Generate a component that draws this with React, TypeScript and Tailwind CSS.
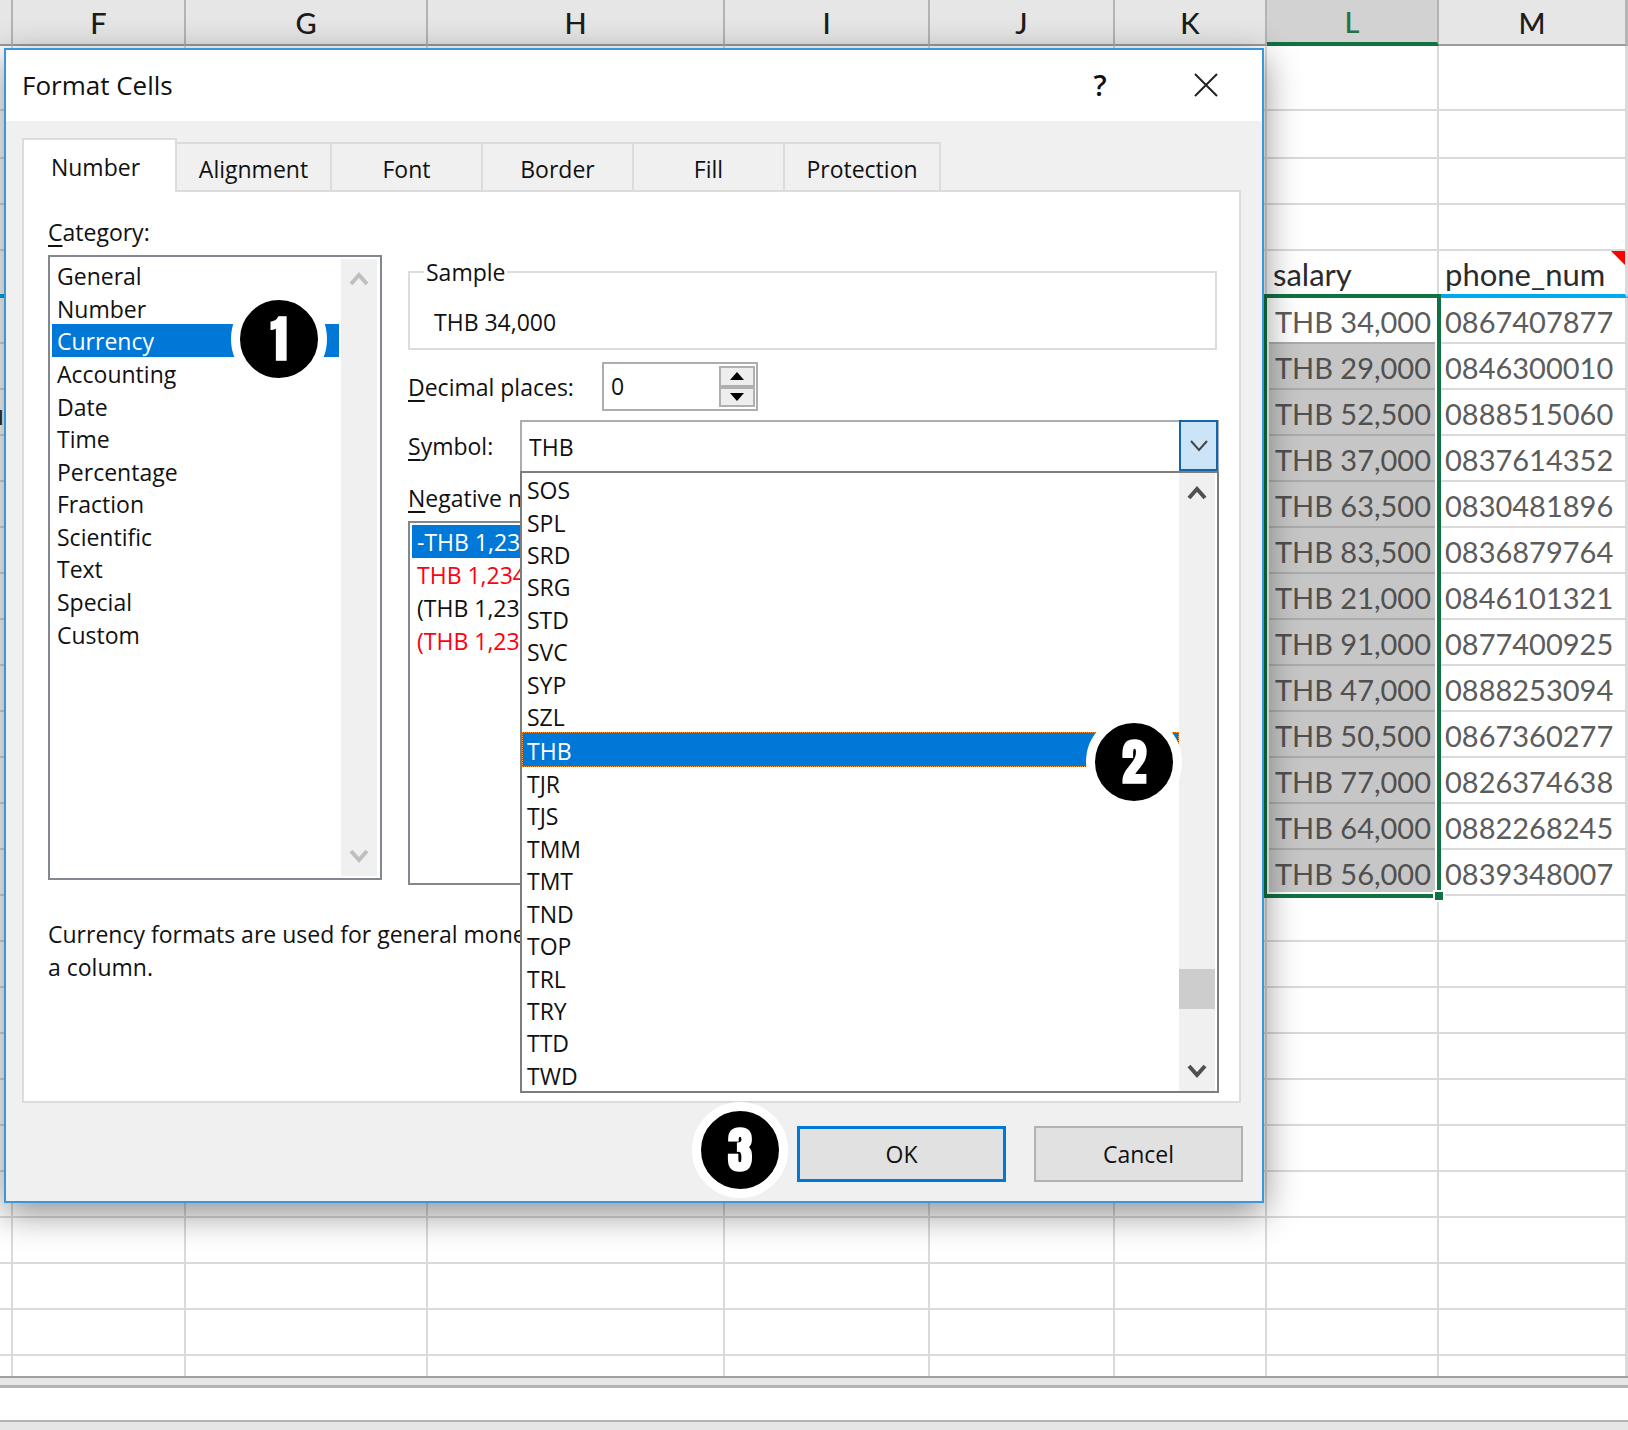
import type { ReactNode } from "react";

const columns = [
  { name: "", width: "w-[13px]" },
  { name: "F", width: "w-[173px]" },
  { name: "G", width: "w-[242px]" },
  { name: "H", width: "w-[297px]" },
  { name: "I", width: "w-[205px]" },
  { name: "J", width: "w-[185px]" },
  { name: "K", width: "w-[152px]" },
  { name: "L", width: "w-[172px]" },
  { name: "M", width: "w-[188px]" },
  { name: "", width: "" },
];

const people = [
  ["THB 34,000", "0867407877"],
  ["THB 29,000", "0846300010"],
  ["THB 52,500", "0888515060"],
  ["THB 37,000", "0837614352"],
  ["THB 63,500", "0830481896"],
  ["THB 83,500", "0836879764"],
  ["THB 21,000", "0846101321"],
  ["THB 91,000", "0877400925"],
  ["THB 47,000", "0888253094"],
  ["THB 50,500", "0867360277"],
  ["THB 77,000", "0826374638"],
  ["THB 64,000", "0882268245"],
  ["THB 56,000", "0839348007"],
];

const categories = [
  "General", "Number", "Currency", "Accounting", "Date", "Time",
  "Percentage", "Fraction", "Scientific", "Text", "Special", "Custom",
];

const symbols = [
  "SOS", "SPL", "SRD", "SRG", "STD", "SVC", "SYP", "SZL", "THB", "TJR",
  "TJS", "TMM", "TMT", "TND", "TOP", "TRL", "TRY", "TTD", "TWD",
];

const negatives = [
  { text: "-THB 1,234", tone: "bg-[#0078d7] text-white" },
  { text: "THB 1,234", tone: "text-[#ff0010]" },
  { text: "(THB 1,234)", tone: "text-[#111]" },
  { text: "(THB 1,234)", tone: "text-[#ff0010]" },
];

const tabs = ["Alignment", "Font", "Border", "Fill", "Protection"];
const tabWidths = ["w-[155px]", "w-[151px]", "w-[151px]", "w-[151px]", "w-[156px]"];

const cell = "border-r-2 border-b-2 border-[#dadada] p-0";

function EmptyRow({ height, last = false }: { height: string; last?: boolean }) {
  return (
    <tr className={height}>
      {columns.map((_, i) => (
        <td key={i} className={last ? "border-r-2 border-[#dadada] p-0" : cell} />
      ))}
    </tr>
  );
}

function Sheet() {
  return (
    <table className="w-full table-fixed border-separate border-spacing-0 font-['Lato',sans-serif] text-[29px] leading-[40px] text-[#2b2b2b]">
      <colgroup>
        {columns.map((c, i) => (
          <col key={i} className={c.width} />
        ))}
      </colgroup>
      <thead>
        <tr className="h-[46px] bg-[#e6e6e6] text-[#1c1c1c]">
          {columns.map((c, i) => (
            <th
              key={i}
              scope="col"
              className={
                c.name === "L"
                  ? "border-r-2 border-b-4 border-r-[#b4b4b4] border-b-[#107240] bg-[#d2d2d2] p-0 pt-0.5 font-medium text-[#217346]"
                  : "border-r-2 border-b-2 border-r-[#b4b4b4] border-b-[#9b9b9b] p-0 pt-0.5 font-medium"
              }
            >
              {c.name}
            </th>
          ))}
        </tr>
      </thead>
      <tbody>
        <EmptyRow height="h-[65px]" />
        <EmptyRow height="h-[48px]" />
        <EmptyRow height="h-[46px]" />
        <EmptyRow height="h-[46px]" />
        <tr className="h-[47px] text-[31px]">
          {columns.map((c, i) => (
            <td key={i} className="relative border-r-2 border-b-4 border-r-[#dadada] border-b-[#00a9ee] p-0 pt-0.5 whitespace-nowrap">
              {c.name === "L" && <span className="pl-1.5">salary</span>}
              {c.name === "M" && (
                <>
                  <span className="pl-1.5">phone_num</span>
                  <svg className="absolute top-0 right-0 h-3.5 w-3.5" viewBox="0 0 14 14" aria-hidden="true">
                    <path d="M0 0H14V14Z" fill="#f00" />
                  </svg>
                </>
              )}
            </td>
          ))}
        </tr>
        {people.map(([salary, phone], row) => (
          <tr key={phone} className="h-[46px] text-[#5c5c5c]">
            <td className={cell}>
              {row === 2 && (
                <div className="flex h-10 justify-end overflow-hidden pt-0.5 pr-[7px] text-[#333]">
                  <span>u</span>
                </div>
              )}
            </td>
            {columns.slice(1, 7).map((c) => (
              <td key={c.name} className={cell} />
            ))}
            <td
              className={
                row === 0
                  ? "relative border-r-2 border-b-2 border-[#ababab] bg-white p-0 pt-1 pr-1.5 text-right whitespace-nowrap"
                  : "border-r-2 border-b-2 border-[#ababab] bg-[#c6c6c6] p-0 pt-1 pr-1.5 text-right whitespace-nowrap text-[#505050]"
              }
            >
              {salary}
              {row === 0 && (
                <div className="absolute -top-1 -left-1 h-[604px] w-[178px] border-4 border-[#107240]">
                  <div className="h-full border-2 border-white" />
                  <div className="absolute -right-2 -bottom-2 h-3 w-3 border-2 border-white bg-[#107240]" />
                </div>
              )}
            </td>
            <td className="border-r-2 border-b-2 border-[#dadada] p-0 pt-1">
              <span className="pl-1.5">{phone}</span>
            </td>
            <td className={cell} />
          </tr>
        ))}
        {Array.from({ length: 10 }, (_, i) => (
          <EmptyRow key={i} height="h-[46px]" />
        ))}
        <EmptyRow height="h-[20px]" last />
      </tbody>
    </table>
  );
}

function Badge({ place, children }: { place: string; children: ReactNode }) {
  return (
    <span
      className={`absolute z-10 flex h-24 w-24 items-center justify-center rounded-full border-[9px] border-white bg-black font-['Impact','Anton','Noto_Sans_ExtraCondensed_Black','Noto_Sans_ExtraCondensed','Open_Sans_Condensed','Roboto_Condensed','DejaVu_Sans_Condensed',sans-serif] text-[50px] leading-none font-black text-white ${place}`}
    >
      {children}
    </span>
  );
}

function Chevron({ up = false, thin = false, color }: { up?: boolean; thin?: boolean; color: string }) {
  return (
    <svg className="h-5 w-5" viewBox="0 0 20 20" fill="none" stroke={color} strokeWidth={thin ? 2 : 4} aria-hidden="true">
      <path d={up ? "M2 15L10 6L18 15" : "M2 5L10 14L18 5"} />
    </svg>
  );
}

function Key({ children }: { children: string }) {
  return <span className="underline decoration-2 underline-offset-4">{children}</span>;
}

function SymbolPicker() {
  return (
    <div className="relative -mr-0.5 h-[51px] flex-1">
      <select
        id="symbol"
        defaultValue="THB"
        className="h-full w-full appearance-none border-2 border-b-0 border-[#acacb4] bg-white pl-[7px]"
      >
        {symbols.map((s) => (
          <option key={s}>{s}</option>
        ))}
      </select>
      <span className="pointer-events-none absolute top-0 right-px flex h-full w-[39px] items-center justify-center border-2 border-[#1166ac] bg-[#cce4f7]">
        <Chevron thin color="#444" />
      </span>
      <div className="absolute top-full right-0 left-0 flex h-[622px] border-2 border-[#7d7d7d] bg-white">
        <ul role="listbox" aria-label="Symbol" className="flex flex-1 flex-col leading-7">
          {symbols.map((s) => (
            <li
              key={s}
              role="option"
              aria-selected={s === "THB"}
              className={
                s === "THB"
                  ? "relative flex flex-1 items-center border border-dotted border-[#ff9a3c] bg-[#0078d7] pt-0.5 pl-1 text-white"
                  : "flex flex-1 items-center pt-0.5 pl-[5px]"
              }
            >
              {s}
              {s === "THB" && <Badge place="-right-1 -top-[19px]">2</Badge>}
            </li>
          ))}
        </ul>
        <div className="mr-0.5 flex w-9 flex-col items-center bg-[#f0f0f0] pt-2.5 pb-2.5">
          <Chevron up color="#505050" />
          <div className="mt-[466px] h-10 w-full bg-[#cdcdcd]" />
          <div className="flex-1" />
          <Chevron color="#505050" />
        </div>
      </div>
    </div>
  );
}

function FormatDialog() {
  return (
    <div
      role="dialog"
      aria-labelledby="dialog-title"
      className="absolute top-12 left-1 w-[1260px] border-2 border-[#3c96dc] bg-[#f0f0f0] font-['Open_Sans','Noto_Sans',sans-serif] text-[23px] leading-[32px] text-[#111] shadow-[0_10px_34px_rgba(0,0,0,0.45)]"
    >
      <header className="flex h-[71px] items-center bg-white pr-11 pb-0.5 pl-4">
        <h1 id="dialog-title" className="flex-1 text-[26px]">
          Format Cells
        </h1>
        <button aria-label="Help" className="w-8 text-[29px] leading-8 font-semibold">
          ?
        </button>
        <button aria-label="Close" className="ml-[78px] flex h-6 w-6">
          <svg viewBox="0 0 24 24" stroke="#222" strokeWidth="2" aria-hidden="true">
            <path d="M1 1L23 23M23 1L1 23" />
          </svg>
        </button>
      </header>

      <div className="pt-[17px] pr-[19px] pb-[19px] pl-4">
        <div role="tablist" className="flex items-end">
          <button role="tab" aria-selected="true" className="relative -mb-0.5 h-[54px] w-[155px] border-2 border-b-0 border-[#dcdcdc] bg-white pt-0.5 pr-2">
            Number
          </button>
          {tabs.map((t, i) => (
            <button key={t} role="tab" aria-selected="false" className={`h-12 border-t-2 border-r-2 border-[#dcdcdc] pt-1 ${tabWidths[i]}`}>
              {t}
            </button>
          ))}
        </div>

        <section className="mr-0.5 border-2 border-[#dcdcdc] bg-white pt-6 pr-[22px] pl-6">
          <div className="flex gap-[26px]">
            <div className="w-[334px]">
              <div id="category-label">
                <Key>C</Key>ategory:
              </div>
              <div className="mt-[7px] flex h-[625px] border-2 border-[#828790] py-0.5 pr-[3px] pl-0.5">
                <ul role="listbox" aria-labelledby="category-label" className="mr-0.5 flex h-[391px] flex-1 flex-col leading-7">
                  {categories.map((c) => (
                    <li
                      key={c}
                      role="option"
                      aria-selected={c === "Currency"}
                      className={
                        c === "Currency"
                          ? "relative flex flex-1 items-center bg-[#0078d7] pt-0.5 pl-[5px] text-white"
                          : "flex flex-1 items-center pt-0.5 pl-[5px]"
                      }
                    >
                      {c}
                      {c === "Currency" && <Badge place="right-3 -top-[33px]">1</Badge>}
                    </li>
                  ))}
                </ul>
                <div className="flex w-9 flex-col items-center justify-between bg-[#f0f0f0] py-2.5">
                  <Chevron up color="#bfbfbf" />
                  <Chevron color="#bfbfbf" />
                </div>
              </div>
            </div>

            <div className="flex-1 pt-10">
              <fieldset className="h-[94px] border-2 border-[#dcdcdc] px-3.5">
                <legend className="px-0.5">Sample</legend>
                <output className="mt-[18px] ml-2.5 block">THB 34,000</output>
              </fieldset>
              <div className="mt-3 flex items-center">
                <label htmlFor="decimals" className="w-[194px]">
                  <Key>D</Key>ecimal places:
                </label>
                <div className="flex h-[49px] w-[156px] border-2 border-[#acacb4] bg-white py-0.5 pr-px pl-0.5">
                  <input id="decimals" defaultValue="0" className="w-0 flex-1 pb-0.5 pl-[5px] outline-none" />
                  <div className="flex w-9 flex-col">
                    <button aria-label="Increase" className="flex flex-1 items-center justify-center border-2 border-[#b0b0b0] bg-[#eee]">
                      <svg className="h-2 w-4" viewBox="0 0 16 8" aria-hidden="true">
                        <path d="M1 8L8 0L15 8Z" />
                      </svg>
                    </button>
                    <button aria-label="Decrease" className="flex flex-1 items-center justify-center border-2 border-[#b0b0b0] bg-[#eee]">
                      <svg className="h-2 w-4" viewBox="0 0 16 8" aria-hidden="true">
                        <path d="M1 0L8 8L15 0Z" />
                      </svg>
                    </button>
                  </div>
                </div>
              </div>
              <div className="mt-[9px] flex items-center">
                <label htmlFor="symbol" className="w-28">
                  <Key>S</Key>ymbol:
                </label>
                <SymbolPicker />
              </div>
              <div id="negative-label" className="mt-[11px]">
                <Key>N</Key>egative numbers:
              </div>
              <ul role="listbox" aria-labelledby="negative-label" className="mt-[7px] flex h-[364px] flex-col border-2 border-[#828790] p-0.5">
                {negatives.map((n, i) => (
                  <li key={i} role="option" aria-selected={i === 0} className={`flex h-[33px] items-center pl-[5px] ${n.tone}`}>
                    {n.text}
                  </li>
                ))}
              </ul>
            </div>
          </div>
          <p className="mt-[33px] min-h-[183px] leading-[33px]">
            Currency formats are used for general monetary values. Use Accounting formats to align decimal points in
            <br />a column.
          </p>
        </section>

        <footer className="mt-[23px] flex justify-end gap-7">
          <div className="relative">
            <Badge place="-left-[105px] -top-6">3</Badge>
            <button className="h-14 w-[209px] border-[3px] border-[#0078d7] bg-[#e1e1e1]">OK</button>
          </div>
          <button className="h-14 w-[209px] border-2 border-[#b2b2b2] bg-[#e1e1e1]">Cancel</button>
        </footer>
      </div>
    </div>
  );
}

export default function App() {
  return (
    <main className="relative min-h-screen w-full overflow-hidden bg-white">
      <Sheet />
      <div className="h-3 border-t-2 border-b-[3px] border-t-[#a0a0a0] border-b-[#b4b4b4] bg-[#e6e6e6]" />
      <div className="h-8 bg-white" />
      <div className="h-2.5 border-t-2 border-[#b4b4b4] bg-[#e6e6e6]" />
      <FormatDialog />
    </main>
  );
}
